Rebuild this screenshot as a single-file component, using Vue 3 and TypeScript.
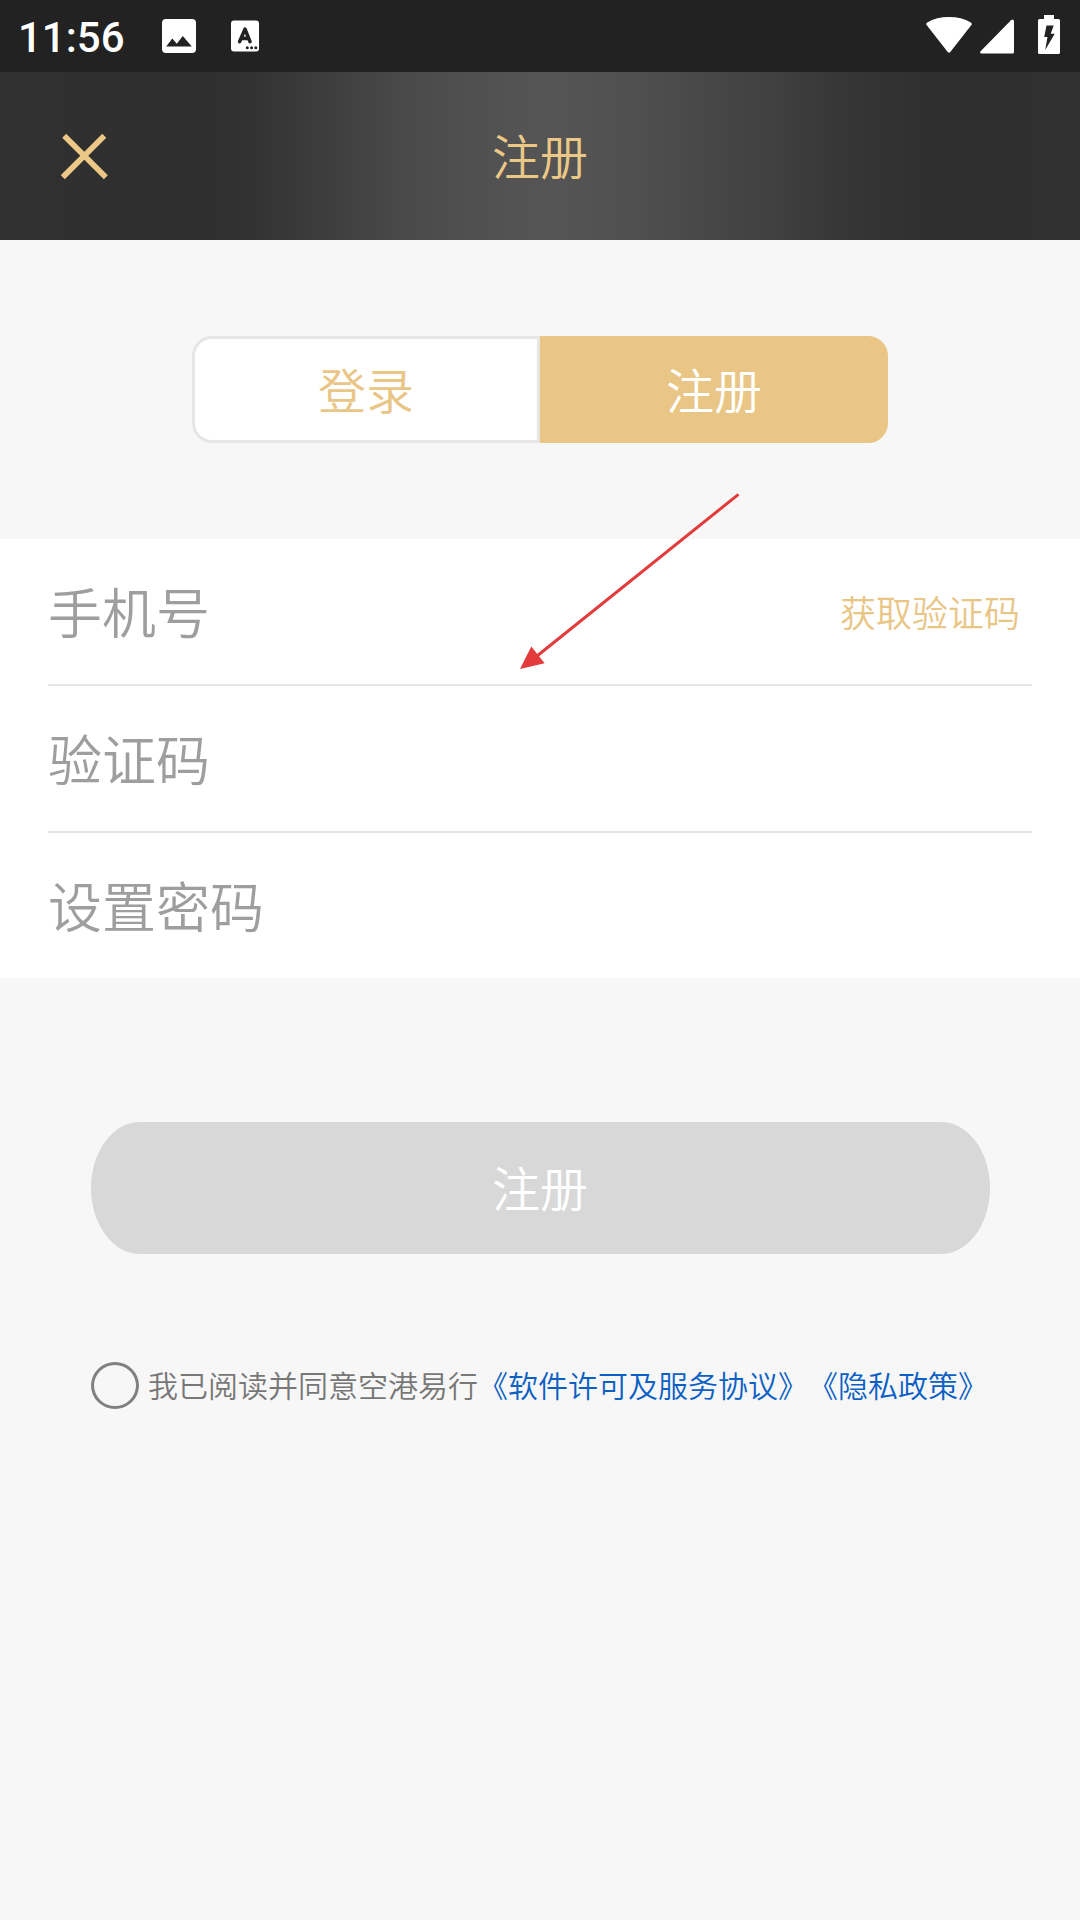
<script setup lang="ts">
import { ref } from 'vue'

interface Field {
  id: string
  label: string
  action?: string
}

const tabs = ['登录', '注册']
const activeTab = ref(1)
const agreed = ref(false)

const fields: Field[] = [
  { id: 'phone', label: '手机号', action: '获取验证码' },
  { id: 'code', label: '验证码' },
  { id: 'password', label: '设置密码' },
]
</script>

<template>
  <div class="screen">
    <div class="status">
      <span class="time">11:56</span>
      <svg class="photo" width="36" height="36" viewBox="0 0 36 36">
        <rect x="1" y="1" width="34" height="34" rx="4" fill="#fff" />
        <path d="M5.2 28.5 11.3 20.5 15.8 25.8 21.8 18 30.8 28.5z" fill="#222" />
      </svg>
      <svg class="lang" width="28" height="32" viewBox="0 0 28 32">
        <rect x="0" y="0.5" width="28" height="31" rx="3" fill="#fff" />
        <path d="M8.6 21.6 14 9.2 19 21.6M10.2 18.4h7.4" fill="none" stroke="#222" stroke-width="3.6" stroke-linecap="round" stroke-linejoin="round" />
        <g fill="#222">
          <circle cx="16.3" cy="27.8" r="1.5" />
          <circle cx="20.6" cy="27.8" r="1.5" />
          <circle cx="24.8" cy="27.8" r="1.5" />
        </g>
      </svg>
      <span class="grow"></span>
      <svg class="wifi" width="46" height="38" viewBox="0 0 46 38">
        <path d="M0.8 9.3Q-0.6 7.6 1.2 6.4Q10.5 1 23 1T44.8 6.4Q46.600 7.600 45.200 9.300L24.300 36.100Q23 37.500 21.700 36.100z" fill="#fff" />
      </svg>
      <svg class="signal" width="34" height="35" viewBox="0 0 34 35">
        <path d="M0.600 32.200 31 1.200Q33.300 -0.600 34 2V33Q34 34.500 32.500 34.500H1.500Q-0.700 34.300 0.600 32.200z" fill="#fff" />
      </svg>
      <svg class="battery" width="22" height="39" viewBox="0 0 22 39">
        <path d="M6 0H16V4H20.500Q22 4 22 5.500V37.500Q22 39 20.500 39H1.500Q0 39 0 37.500V5.500Q0 4 1.500 4H6z" fill="#fff" />
        <path d="M8.500 10.500H15.700L12.700 18.700H16.700L7.200 35 9.500 22H6.200z" fill="#222" />
      </svg>
    </div>

    <header class="bar">
      <button class="close" aria-label="关闭">
        <svg width="48" height="48" viewBox="0 0 48 48">
          <path d="M3.300 2.300 45.800 44.700M44.200 2.300 1.800 44.700" stroke="#ebc886" stroke-width="5.800" />
        </svg>
      </button>
      <h1>注册</h1>
    </header>

    <nav class="tabs">
      <button
        v-for="(tab, i) in tabs"
        :key="tab"
        class="tab"
        :class="{ active: i === activeTab }"
        @click="activeTab = i"
      >{{ tab }}</button>
    </nav>

    <section class="form">
      <div v-for="f in fields" :key="f.id" class="row">
        <span class="label">{{ f.label }}</span>
        <button v-if="f.action" class="code">{{ f.action }}</button>
      </div>
    </section>

    <button class="submit">注册</button>

    <div class="agree">
      <span class="check" @click="agreed = !agreed"></span>
      <p>我已阅读并同意空港易行<a>《软件许可及服务协议》</a><a>《隐私政策》</a></p>
    </div>

    <svg class="arrow" width="226" height="182" viewBox="0 0 226 182">
      <path d="M218.500 4.300 17 166" stroke="#e33b3b" stroke-width="3" />
      <path d="M0 179 11.300 156.500 24.600 173.200z" fill="#e33b3b" />
    </svg>
  </div>
</template>

<style>
body {
  margin: 0;
  background: #f7f7f7;
}
</style>

<style scoped>
.screen {
  position: relative;
  display: flex;
  flex-direction: column;
  width: 1080px;
  height: 1920px;
  overflow: hidden;
  background: #f7f7f7;
  font-family: "Noto Sans CJK SC", sans-serif;
  font-weight: 350;
  text-spacing-trim: space-all;
}

button {
  margin: 0;
  padding: 0;
  border: 0;
  background: none;
  font: inherit;
}

.status {
  display: flex;
  align-items: flex-start;
  box-sizing: border-box;
  height: 72px;
  padding: 0 20px 0 18px;
  background: #222;
}

.time {
  width: 143px;
  margin-top: 13px;
  color: #fff;
  font: 500 42px/49px Roboto, sans-serif;
  white-space: nowrap;
}

.photo { margin-top: 18px; }
.lang { margin: 20px 0 0 34px; }
.grow { flex: 1; }
.wifi { margin-top: 16px; }
.signal { margin: 19px 0 0 8px; }
.battery { margin: 15px 0 0 24px; }

.bar {
  display: grid;
  grid-template-columns: 108px 1fr 108px;
  align-items: center;
  height: 168px;
  background: linear-gradient(90deg, #303030 0, #2f2f2f 205px, #323232 250px, #3a3a3a 305px, #424242 355px, #494949 400px, #4f4f4f 460px, #545454 530px, #545454 565px, #4f4f4f 640px, #474747 710px, #404040 775px, #363636 840px, #2f2f2f 930px, #303030 1080px);
}

.close {
  display: flex;
  margin: 2px 0 0 61px;
}

h1 {
  margin: 0;
  padding-bottom: 4px;
  color: #ebc886;
  font-size: 48px;
  font-weight: inherit;
  line-height: 70px;
  text-align: center;
}

.tabs {
  display: flex;
  width: 696px;
  height: 107px;
  margin: 96px auto;
}

.tab {
  flex: 1;
  box-sizing: border-box;
  padding-bottom: 4px;
  border: 3px solid #e6e6e6;
  border-radius: 20px 0 0 20px;
  background: #fff;
  color: #e9c686;
  font-size: 48px;
  line-height: 70px;
}

.tab.active {
  border-color: #e9c686;
  border-radius: 0 20px 20px 0;
  background: #e9c686;
  color: #fff;
}

.form {
  padding: 0 48px;
  background: #fff;
}

.row {
  display: flex;
  align-items: center;
  justify-content: space-between;
  height: 145px;
}

.row + .row {
  border-top: 2px solid #e5e5e5;
}

.label {
  padding-bottom: 2px;
  color: #9e9e9e;
  font-size: 54px;
  line-height: 78px;
}

.code {
  margin-right: 12px;
  padding-bottom: 2px;
  color: #e9c686;
  font-size: 36px;
  line-height: 52px;
}

.submit {
  width: 899px;
  height: 132px;
  margin: 144px auto 0;
  padding-bottom: 4px;
  border-radius: 49px / 66px;
  background: #d8d8d8;
  color: #fff;
  font-size: 48px;
  line-height: 70px;
}

.agree {
  display: flex;
  align-items: center;
  height: 48px;
  margin: 107px 0 0 91px;
}

.check {
  box-sizing: border-box;
  width: 48px;
  height: 47px;
  margin-right: 9px;
  border: 3px solid #808080;
  border-radius: 50%;
}

.agree p {
  margin: 0;
  padding-bottom: 2px;
  color: #777;
  font-size: 30px;
  line-height: 44px;
  white-space: nowrap;
}

.agree a {
  color: #0b60c4;
}

.arrow {
  position: absolute;
  left: 520px;
  top: 490px;
}
</style>
